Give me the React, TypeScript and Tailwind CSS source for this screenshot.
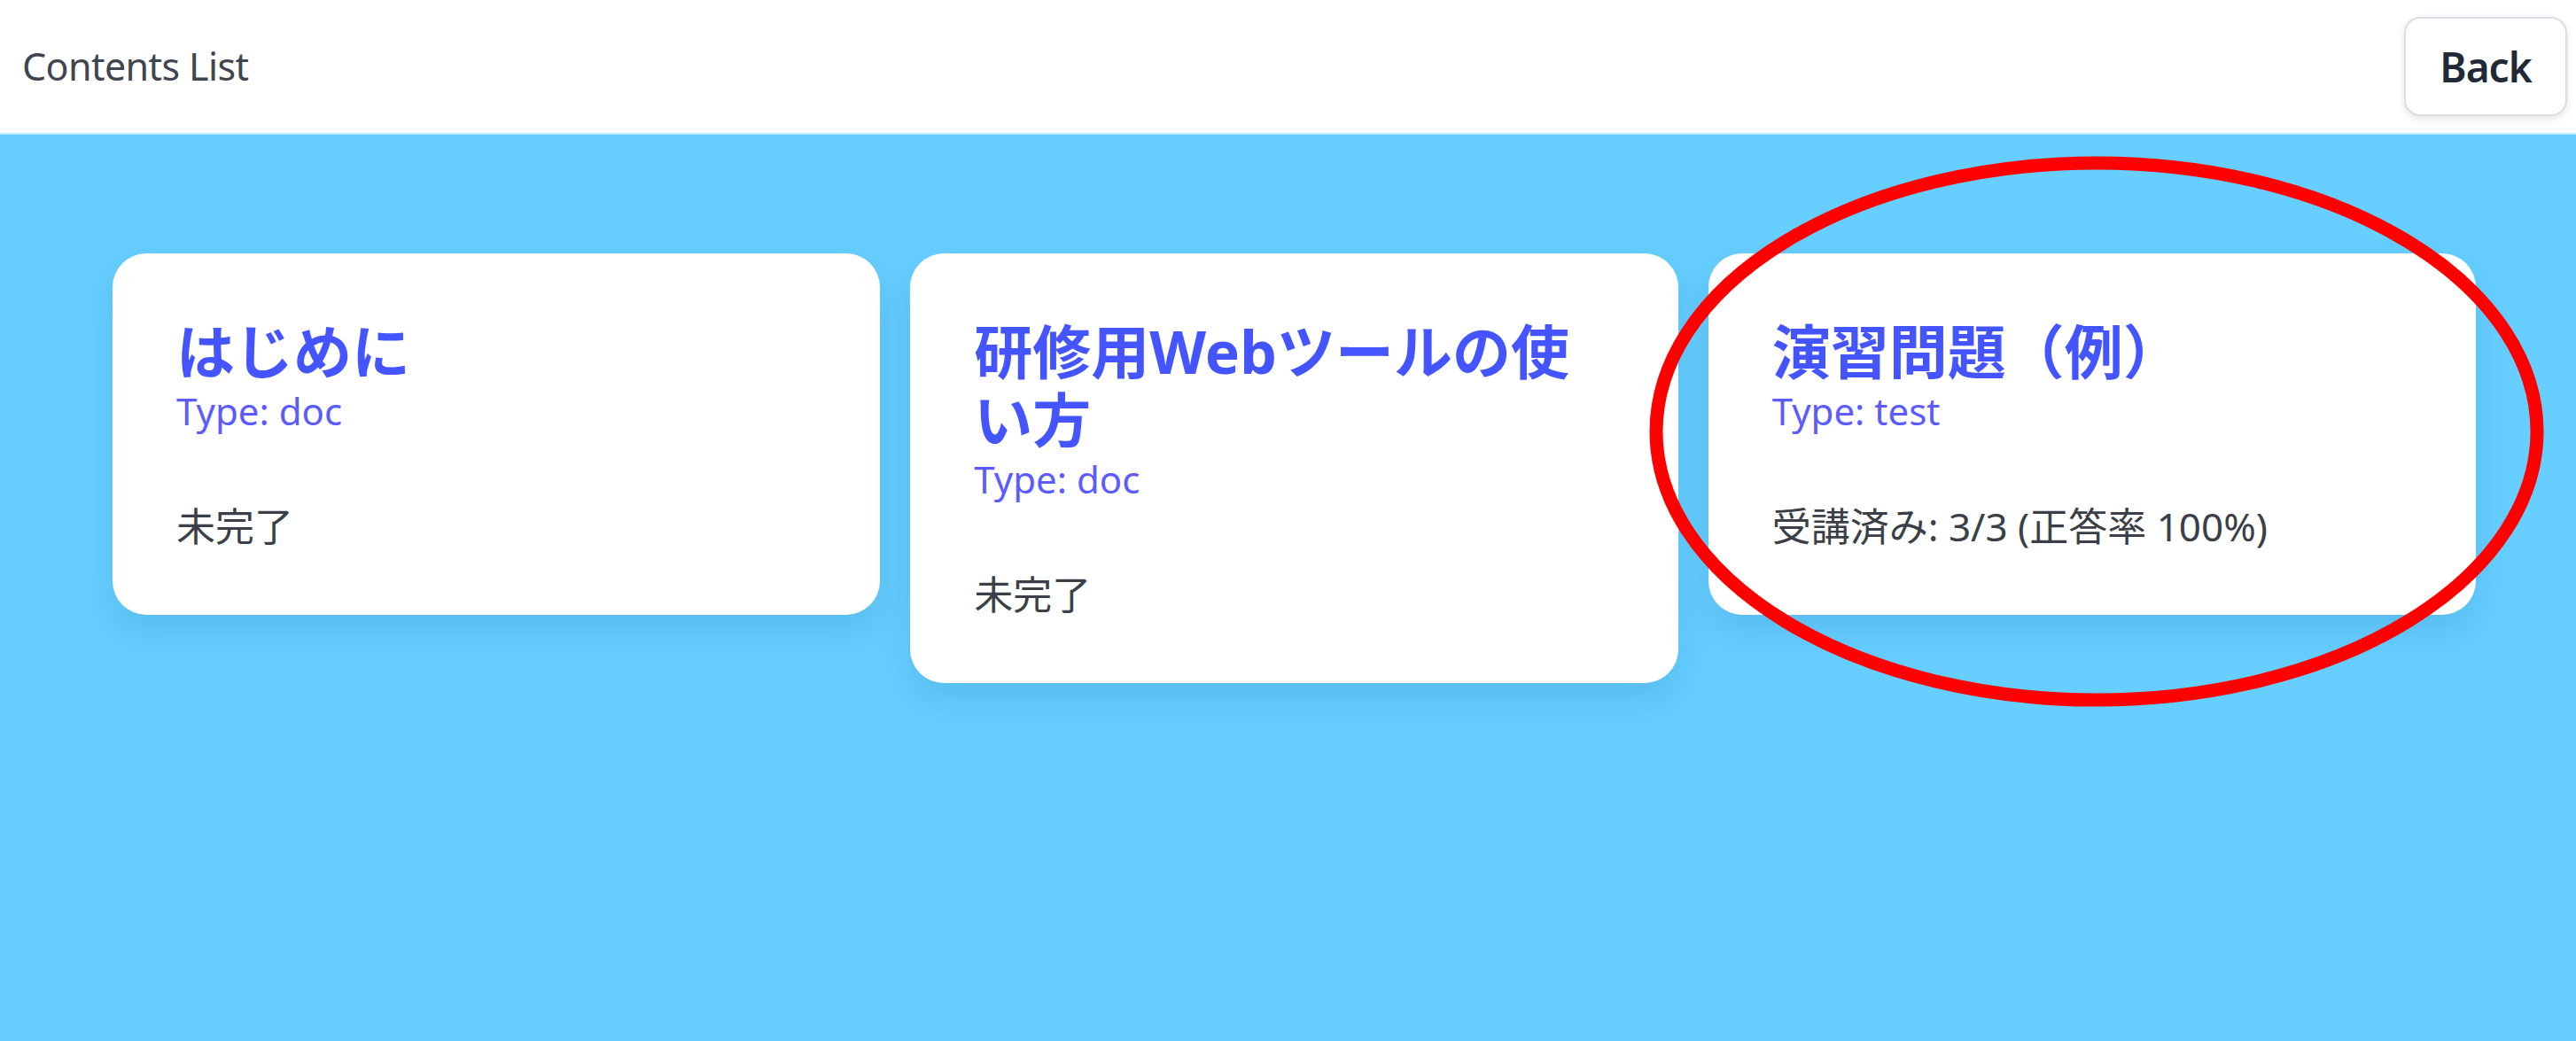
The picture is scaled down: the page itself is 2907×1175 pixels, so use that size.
import React from "react";

const cards = [
  { title: "はじめに", type: "doc", status: "未完了" },
  { title: "研修用Webツールの使い方", type: "doc", status: "未完了" },
  { title: "演習問題（例）", type: "test", status: "受講済み: 3/3 (正答率 100%)" },
];

export default function App() {
  return (
    <div
      className="relative h-[1175px] w-full overflow-hidden bg-[#66cfff] flex flex-col"
      style={{ fontFamily: '"Noto Sans", "Noto Sans CJK JP", sans-serif' }}
    >
      <header className="h-[152px] shrink-0 bg-white border-b-2 border-[#bde9ff] flex items-center justify-between pl-[25px] pr-[10px]">
        <div className="text-[43px] tracking-[-0.6px] text-[#3f4650]">Contents List</div>
        <button className="w-[184px] h-[112px] rounded-[18px] border-2 border-[#d9dde5] bg-white shadow-[0_3px_8px_rgba(0,0,0,0.10)] text-[46px] font-semibold tracking-[-1px] text-[#222936] flex items-center justify-center">
          Back
        </button>
      </header>
      <main className="grid grid-cols-3 gap-[34px] pl-[127px] pr-[113px] pt-[134px] items-start">
        {cards.map((c) => (
          <div
            key={c.title}
            className="bg-white rounded-[38px] p-[72px] shadow-[0_18px_40px_rgba(20,90,140,0.16)]"
          >
            <h2 className="text-[66px] font-bold leading-[77px] text-[#4455ff]">{c.title}</h2>
            <p className="text-[42px] leading-[58px] text-[#5b5bff]">Type: {c.type}</p>
            <p className="mt-[73px] text-[44px] leading-[56px] text-[#3b3f47]">{c.status}</p>
          </div>
        ))}
      </main>
      <svg
        className="absolute left-0 top-0 pointer-events-none"
        width="2907"
        height="1175"
        viewBox="0 0 2907 1175"
      >
        <ellipse cx="2366" cy="487" rx="497" ry="303" fill="none" stroke="#ff0000" strokeWidth="15" />
      </svg>
    </div>
  );
}
